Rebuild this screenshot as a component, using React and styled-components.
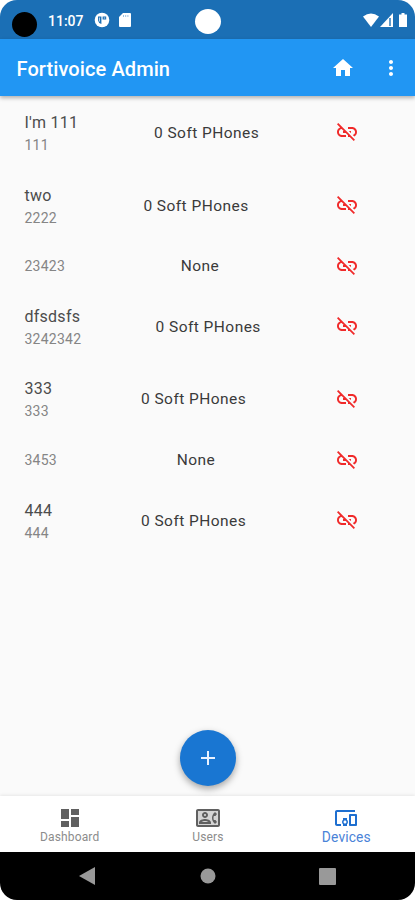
import React, { useState } from 'react'
import styled, { createGlobalStyle } from 'styled-components'
import {
  MdAdd,
  MdDashboard,
  MdDevicesOther,
  MdHome,
  MdLinkOff,
  MdMoreVert,
  MdOutlineContactPhone,
} from 'react-icons/md'

const GlobalStyle = createGlobalStyle`
  * {
    box-sizing: border-box;
  }

  body {
    margin: 0;
    background: #fff;
    font-family: Roboto, 'Liberation Sans', sans-serif;
  }

  svg {
    display: block;
  }
`

const Phone = styled.div`
  position: relative;
  display: flex;
  flex-direction: column;
  width: 415px;
  height: 900px;
  overflow: hidden;
  border-radius: 17px;
  background: #fafafa;
`

const StatusBar = styled.div`
  display: flex;
  align-items: center;
  flex: none;
  height: 39px;
  padding: 1px 7px 0 12px;
  background: #1b6fb5;
  color: #fff;
`

const Camera = styled.div`
  width: 25px;
  height: 25px;
  margin-top: 8px;
  border-radius: 50%;
  background: #000;
`

const Clock = styled.div`
  margin-left: 11px;
  padding-top: 1px;
  width: 46px;
  font-size: 14px;
  font-weight: 500;
`

const StatusIcons = styled.div`
  display: flex;
  align-items: center;
  gap: ${(props) => props.$gap};
  margin-left: ${(props) => props.$push || 0};
`

/* cutout in the middle of the status bar */
const Notch = styled.div`
  position: absolute;
  top: 9px;
  left: 195px;
  width: 26px;
  height: 25px;
  border-radius: 50%;
  background: #fff;
`

const AppBar = styled.div`
  position: relative;
  display: flex;
  align-items: center;
  flex: none;
  height: 57px;
  padding: 0 12px 0 16.5px;
  background: #2196f3;
  box-shadow: 0 2px 4px rgba(0, 0, 0, 0.3);
  color: #fff;
`

const AppTitle = styled.div`
  flex: 1;
  padding-top: 2px;
  font-size: 20px;
  font-weight: 500;
  letter-spacing: 0.1px;
`

const BarButton = styled.div`
  margin-left: 24px;
  cursor: pointer;
`

const List = styled.div`
  flex: 1;
`

const Row = styled.div`
  display: flex;
  align-items: center;
  justify-content: space-between;
  height: ${(props) => (props.$tall ? '72.7px' : '48.5px')};
  padding: 1px 56px 0 24.5px;
`

const RowName = styled.div`
  padding-top: 2px;
  color: #4c4c4c;
  font-size: 16px;
  line-height: 22px;
  letter-spacing: 0.25px;
`

const RowNumber = styled.div`
  color: #858585;
  font-size: 14px;
  line-height: 22px;
  letter-spacing: 0.25px;
`

const RowPhones = styled.div`
  color: #3a3a3a;
  font-size: 15.5px;
  letter-spacing: 0.45px;
`

const Unlink = styled.div`
  margin-top: -1px;
  color: #f02a2a;
  cursor: pointer;
`

const AddButton = styled.div`
  position: absolute;
  top: 730px;
  left: 180px;
  display: flex;
  align-items: center;
  justify-content: center;
  width: 56px;
  height: 56px;
  border-radius: 50%;
  background: #1976d2;
  box-shadow: 0 3px 7px rgba(0, 0, 0, 0.35);
  color: #e8f1ff;
  cursor: pointer;
`

const Tabs = styled.div`
  display: grid;
  grid-template-columns: repeat(3, 1fr);
  flex: none;
  height: 56px;
  background: #fff;
  box-shadow: 0 -1px 3px rgba(0, 0, 0, 0.08);
`

const Tab = styled.div`
  display: flex;
  flex-direction: column;
  align-items: center;
  padding: 10px 0 0 1px;
  color: ${(props) => (props.$active ? '#1e6fd0' : '#606060')};
  cursor: pointer;
`

const TabLabel = styled.div`
  color: ${(props) => (props.$active ? '#4a83d8' : '#8c8c8c')};
  font-size: ${(props) => (props.$active ? '13.8px' : '12px')};
  line-height: 15px;
  letter-spacing: 0.15px;
`

/* light card behind the contact outline */
const ContactIcon = styled(MdOutlineContactPhone)`
  background: linear-gradient(#d4d4d4, #d4d4d4) center / 20px 15px no-repeat;
`

const NavBar = styled.div`
  display: grid;
  grid-template-columns: 174px 67px 173px;
  align-items: center;
  justify-items: center;
  flex: none;
  height: 48px;
  background: #000;
`

const devices = [
  { id: 1, name: "I'm 111", number: '111', phones: '0 Soft PHones' },
  { id: 2, name: 'two', number: '2222', phones: '0 Soft PHones' },
  { id: 3, number: '23423', phones: 'None' },
  { id: 4, name: 'dfsdsfs', number: '3242342', phones: '0 Soft PHones' },
  { id: 5, name: '333', number: '333', phones: '0 Soft PHones' },
  { id: 6, number: '3453', phones: 'None' },
  { id: 7, name: '444', number: '444', phones: '0 Soft PHones' },
]

const tabs = [
  { label: 'Dashboard', Icon: MdDashboard },
  { label: 'Users', Icon: ContactIcon },
  { label: 'Devices', Icon: MdDevicesOther },
]

const DeviceRow = ({ device }) => (
  <Row $tall={Boolean(device.name)}>
    <div>
      {device.name && <RowName>{device.name}</RowName>}
      <RowNumber>{device.number}</RowNumber>
    </div>
    <RowPhones>{device.phones}</RowPhones>
    <Unlink>
      <MdLinkOff size={24} />
    </Unlink>
  </Row>
)

const Status = () => (
  <StatusBar>
    <Camera />
    <Clock>11:07</Clock>
    <StatusIcons $gap="9px">
      <svg width="16" height="16" viewBox="0 0 16 16">
        <circle cx="8" cy="8" r="7.3" fill="#fff" />
        <path d="M4 4.5h3.4V12A4.5 4.5 0 0 1 4 8.5zM8.6 4.5h3.6v3H8.6z" fill="#1b6fb5" />
        <path d="M5.4 5.5v4M9.8 6h1.4" stroke="#cfe0f0" />
      </svg>
      <svg width="12" height="14" viewBox="0 0 12 14">
        <path d="M4 0h7q1 0 1 1v12q0 1-1 1H1q-1 0-1-1V4z" fill="#fff" />
        <path d="M4.5 2v2M6.7 2v2M8.9 2v2" stroke="#9cc0e0" />
      </svg>
    </StatusIcons>
    <Notch />
    <StatusIcons $gap="1px" $push="auto">
      <svg width="16" height="14" viewBox="0 0 16 14">
        <path d="M0 3.5Q8-2.5 16 3.5L8 14z" fill="#fff" />
      </svg>
      <svg width="13" height="14" viewBox="0 0 13 14">
        <path d="M13 0v14H0z" fill="#fff" />
        <path d="M10 5v8" stroke="#1b6fb5" strokeWidth="1.4" />
      </svg>
      <svg width="14" height="14" viewBox="0 0 14 14">
        <path d="M5 1.5h2.5V0h3v1.5H13V14H5z" fill="#fff" />
      </svg>
    </StatusIcons>
  </StatusBar>
)

const App = () => {
  const [active, setActive] = useState('Devices')

  return (
    <Phone>
      <GlobalStyle />
      <Status />
      <AppBar>
        <AppTitle>Fortivoice Admin</AppTitle>
        <BarButton>
          <MdHome size={24} />
        </BarButton>
        <BarButton>
          <MdMoreVert size={24} />
        </BarButton>
      </AppBar>
      <List>
        {devices.map((device) => (
          <DeviceRow key={device.id} device={device} />
        ))}
      </List>
      <AddButton>
        <MdAdd size={24} />
      </AddButton>
      <Tabs>
        {tabs.map(({ label, Icon }) => (
          <Tab key={label} $active={active === label} onClick={() => setActive(label)}>
            <Icon size={24} />
            <TabLabel $active={active === label}>{label}</TabLabel>
          </Tab>
        ))}
      </Tabs>
      <NavBar>
        <svg width="16" height="18" viewBox="0 0 16 18">
          <path d="M16 0v18L0 9z" fill="#999" />
        </svg>
        <svg width="16" height="16" viewBox="0 0 16 16">
          <circle cx="8" cy="8" r="7.5" fill="#999" />
        </svg>
        <svg width="17" height="17" viewBox="0 0 17 17">
          <rect width="17" height="17" rx="1" fill="#999" />
        </svg>
      </NavBar>
    </Phone>
  )
}

export default App
